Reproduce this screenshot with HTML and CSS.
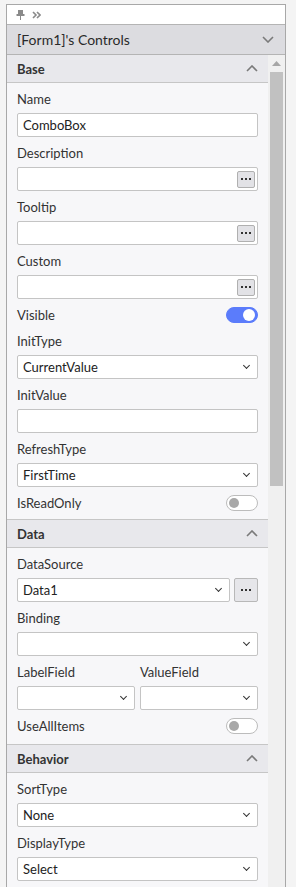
FILE: index.html
```html
<!DOCTYPE html>
<html lang="en">

<head>
    <title>Controls</title>
    <meta charset="UTF-8">
    <link rel="stylesheet" href="styles.css">
</head>

<body>
    <div class="pp-panel">
        <div class="pp-toolbar">
            <svg class="pp-pin" width="9" height="10" viewBox="0 0 9 10">
                <rect x="2" y="0" width="5" height="4" fill="#8a8a8a" />
                <rect x="0.5" y="4" width="8" height="2" fill="#8a8a8a" />
                <rect x="4" y="6" width="1" height="4" fill="#8a8a8a" />
            </svg>
            <svg class="pp-expand" width="9" height="8" viewBox="0 0 9 8">
                <path d="M1 1 L4 4 L1 7 M5 1 L8 4 L5 7" fill="none" stroke="#8a8a8a" stroke-width="1.6" />
            </svg>
        </div>
        <div class="pp-title">
            <span>[Form1]'s Controls</span>
            <svg width="12" height="7" viewBox="0 0 12 7">
                <path d="M1 1 L6 6 L11 1" fill="none" stroke="#7a7a7a" stroke-width="1.6" />
            </svg>
        </div>
        <div class="pp-body">
            <div class="pp-scroll">
                <div class="pp-section">
                    <div class="pp-section-head">
                        <span>Base</span>
                        <svg width="12" height="7" viewBox="0 0 12 7">
                            <path d="M1 6 L6 1 L11 6" fill="none" stroke="#7a7a7a" stroke-width="1.6" />
                        </svg>
                    </div>
                    <div class="pp-section-body">
                        <div class="pp-field">
                            <label>Name</label>
                            <div class="pp-input">ComboBox</div>
                        </div>
                        <div class="pp-field">
                            <label>Description</label>
                            <div class="pp-input"><span class="pp-dots"><i></i><i></i><i></i></span></div>
                        </div>
                        <div class="pp-field">
                            <label>Tooltip</label>
                            <div class="pp-input"><span class="pp-dots"><i></i><i></i><i></i></span></div>
                        </div>
                        <div class="pp-field">
                            <label>Custom</label>
                            <div class="pp-input"><span class="pp-dots"><i></i><i></i><i></i></span></div>
                        </div>
                        <div class="pp-toggle-row">
                            <label>Visible</label>
                            <span class="pp-toggle on"></span>
                        </div>
                        <div class="pp-field">
                            <label>InitType</label>
                            <div class="pp-input pp-select">CurrentValue</div>
                        </div>
                        <div class="pp-field">
                            <label>InitValue</label>
                            <div class="pp-input"></div>
                        </div>
                        <div class="pp-field">
                            <label>RefreshType</label>
                            <div class="pp-input pp-select">FirstTime</div>
                        </div>
                        <div class="pp-toggle-row">
                            <label>IsReadOnly</label>
                            <span class="pp-toggle"></span>
                        </div>
                    </div>
                </div>

                <div class="pp-section">
                    <div class="pp-section-head">
                        <span>Data</span>
                        <svg width="12" height="7" viewBox="0 0 12 7">
                            <path d="M1 6 L6 1 L11 6" fill="none" stroke="#7a7a7a" stroke-width="1.6" />
                        </svg>
                    </div>
                    <div class="pp-section-body pp-data">
                        <div class="pp-field">
                            <label>DataSource</label>
                            <div class="pp-with-btn">
                                <div class="pp-input pp-select">Data1</div>
                                <span class="pp-dots pp-btn"><i></i><i></i><i></i></span>
                            </div>
                        </div>
                        <div class="pp-field">
                            <label>Binding</label>
                            <div class="pp-input pp-select"></div>
                        </div>
                        <div class="pp-pair">
                            <div class="pp-field">
                                <label>LabelField</label>
                                <div class="pp-input pp-select"></div>
                            </div>
                            <div class="pp-field">
                                <label>ValueField</label>
                                <div class="pp-input pp-select"></div>
                            </div>
                        </div>
                        <div class="pp-toggle-row">
                            <label>UseAllItems</label>
                            <span class="pp-toggle"></span>
                        </div>
                    </div>
                </div>

                <div class="pp-section">
                    <div class="pp-section-head">
                        <span>Behavior</span>
                        <svg width="12" height="7" viewBox="0 0 12 7">
                            <path d="M1 6 L6 1 L11 6" fill="none" stroke="#7a7a7a" stroke-width="1.6" />
                        </svg>
                    </div>
                    <div class="pp-section-body">
                        <div class="pp-field">
                            <label>SortType</label>
                            <div class="pp-input pp-select">None</div>
                        </div>
                        <div class="pp-field">
                            <label>DisplayType</label>
                            <div class="pp-input pp-select">Select</div>
                        </div>
                    </div>
                </div>
            </div>
            <div class="pp-scrollbar">
                <svg class="pp-arrow" width="9" height="5" viewBox="0 0 9 5">
                    <path d="M0 5 L4.5 0 L9 5 Z" fill="#a6a6a6" />
                </svg>
                <div class="pp-thumb"></div>
            </div>
        </div>
    </div>
</body>

</html>
```

FILE: styles.css
```css
* {
    box-sizing: border-box;
    font-family: 'Lato', 'Noto Sans', sans-serif;
}

body {
    margin: 0;
    background-color: #f4f4f4;
    color: #333333;
    font-size: 13px;
    overflow: hidden;
}

.pp-panel {
    margin: 4px 0 0 6px;
    width: 280px;
    height: 883px;
    border: 1px solid #a8a8a8;
    border-bottom: none;
    display: flex;
    flex-direction: column;
    background-color: #ffffff;
}

.pp-toolbar {
    height: 20px;
    flex-shrink: 0;
    border-bottom: 1px solid #b4b4b4;
    display: flex;
    align-items: center;
    padding-left: 9px;
    gap: 7px;
}

.pp-title {
    height: 30px;
    flex-shrink: 0;
    background-color: #dcdce0;
    border-bottom: 1px solid #b4b4b4;
    display: flex;
    align-items: center;
    justify-content: space-between;
    padding: 0 11px 0 10px;
    font-size: 14px;
    color: #2a2a2a;
}

.pp-body {
    flex: 1;
    display: flex;
    min-height: 0;
}

.pp-scroll {
    flex: 1;
    overflow: hidden;
    background-color: #f7f7f9;
}

.pp-scrollbar {
    width: 17px;
    background-color: #f0f0f0;
    display: flex;
    flex-direction: column;
    align-items: center;
    padding-top: 6px;
}

.pp-arrow {
    margin-bottom: 6px;
}

.pp-thumb {
    width: 13px;
    height: 414px;
    background-color: #c1c1c1;
}

.pp-section-head {
    height: 29px;
    background-color: #e8e8ec;
    border-top: 1px solid #c6c6c6;
    border-bottom: 1px solid #c6c6c6;
    display: flex;
    align-items: center;
    justify-content: space-between;
    padding: 0 10px;
    font-weight: bold;
    font-size: 13px;
}

.pp-section:first-child .pp-section-head {
    height: 28px;
    border-top: none;
}

.pp-section-body {
    padding: 6px 10px 6px;
    display: flex;
    flex-direction: column;
    gap: 6px;
}

.pp-section-body.pp-data {
    padding-bottom: 8px;
}

.pp-field {
    display: flex;
    flex-direction: column;
    gap: 4px;
}

.pp-field label,
.pp-toggle-row label {
    height: 20px;
    line-height: 20px;
}

.pp-input {
    height: 24px;
    background-color: #ffffff;
    border: 1px solid #c4c4c4;
    border-radius: 2px;
    padding: 0 2px 0 5px;
    display: flex;
    align-items: center;
    justify-content: space-between;
    color: #222222;
}

.pp-dots {
    margin-left: auto;
    width: 18px;
    height: 17px;
    border: 1px solid #b0b0b0;
    border-radius: 2px;
    background-color: #e2e2e6;
    display: flex;
    align-items: center;
    justify-content: center;
    gap: 2px;
}

.pp-dots i {
    width: 2px;
    height: 2px;
    background-color: #333333;
}

.pp-select {
    padding-right: 8px;
}

.pp-select:after {
    content: "";
    margin-left: auto;
    width: 4px;
    height: 4px;
    border-right: 1.6px solid #333;
    border-bottom: 1.6px solid #333;
    transform: translateY(-2px) rotate(45deg);
}

.pp-with-btn {
    display: flex;
    gap: 4px;
}

.pp-with-btn .pp-input {
    flex: 1;
}

.pp-dots.pp-btn {
    width: 24px;
    height: 24px;
    border-color: #b8b8b8;
    background-color: #e6e6ea;
}

.pp-pair {
    display: flex;
    gap: 5px;
}

.pp-pair .pp-field {
    flex: 1;
}

.pp-toggle-row {
    height: 20px;
    display: flex;
    align-items: center;
    justify-content: space-between;
}

.pp-toggle {
    width: 32px;
    height: 16px;
    border-radius: 8px;
    border: 1px solid #bcbcbc;
    background-color: #ffffff;
    display: flex;
    align-items: center;
    padding: 0 2px;
}

.pp-toggle:after {
    content: "";
    width: 10px;
    height: 10px;
    border-radius: 50%;
    background-color: #a8a8a8;
}

.pp-toggle.on {
    background-color: #5b7cfb;
    border-color: #5b7cfb;
    justify-content: flex-end;
}

.pp-toggle.on:after {
    width: 12px;
    height: 12px;
    background-color: #ffffff;
}
```
